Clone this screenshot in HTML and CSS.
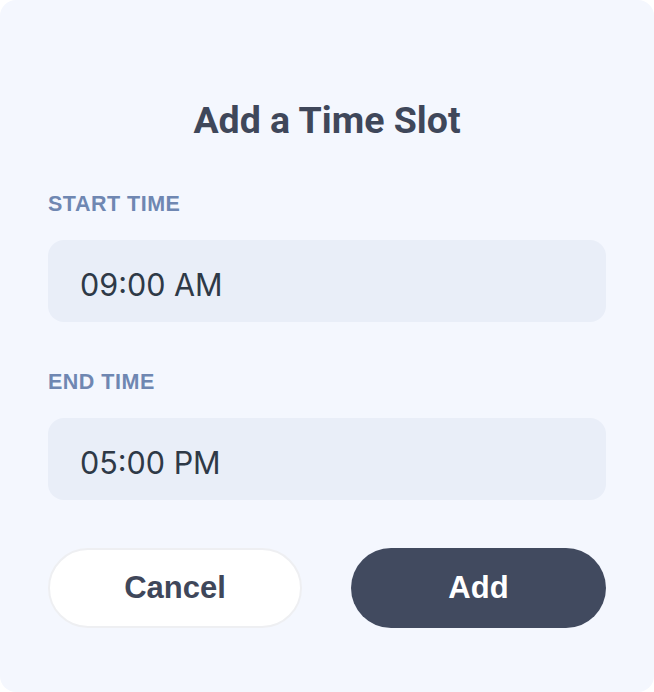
FILE: index.html
```html
<!DOCTYPE html>
<html>
<head>
<meta charset="utf-8">
<link rel="stylesheet" href="styles.css">
</head>
<body>
<div class="card">
  <h1 class="title">Add a Time Slot</h1>
  <div class="field">
    <label class="label">START TIME</label>
    <div class="input">09:00 AM</div>
  </div>
  <div class="field">
    <label class="label">END TIME</label>
    <div class="input">05:00 PM</div>
  </div>
  <div class="actions">
    <button class="btn btn-cancel">Cancel</button>
    <button class="btn btn-add">Add</button>
  </div>
</div>
</body>
</html>
```
FILE: styles.css
```css
html, body {
  margin: 0;
  padding: 0;
  background: #ffffff;
}
.card {
  width: 654px;
  height: 692px;
  box-sizing: border-box;
  background: #f4f7fe;
  border-radius: 16px;
  padding: 96px 48px 0;
  display: flex;
  flex-direction: column;
}
.title {
  margin: 0 0 48px;
  font-family: Roboto, sans-serif;
  font-weight: 700;
  font-size: 37.5px;
  line-height: 48px;
  color: #3f475a;
  text-align: center;
}
.field {
  display: flex;
  flex-direction: column;
  gap: 24px;
  margin-bottom: 48px;
}
.label {
  font-family: "Liberation Sans", Arial, sans-serif;
  font-weight: 700;
  font-size: 21.5px;
  letter-spacing: 0.5px;
  line-height: 24px;
  color: #6f87b2;
  height: 24px;
}
.input {
  height: 82px;
  box-sizing: border-box;
  background: #e9eef8;
  border-radius: 16px;
  padding: 6px 32px 0;
  display: flex;
  align-items: center;
  font-family: Inter, sans-serif;
  font-size: 30.5px;
  color: #2e3947;
}
.actions {
  display: flex;
  gap: 49px;
}
.btn {
  box-sizing: border-box;
  height: 80px;
  border-radius: 40px;
  font-family: "Liberation Sans", Arial, sans-serif;
  font-weight: 700;
  font-size: 31px;
  padding: 0;
}
.btn-cancel {
  width: 254px;
  background: #ffffff;
  border: 2px solid #eeeff2;
  color: #3f475a;
}
.btn-add {
  width: 255px;
  background: #414a5f;
  border: none;
  color: #ffffff;
}
```
